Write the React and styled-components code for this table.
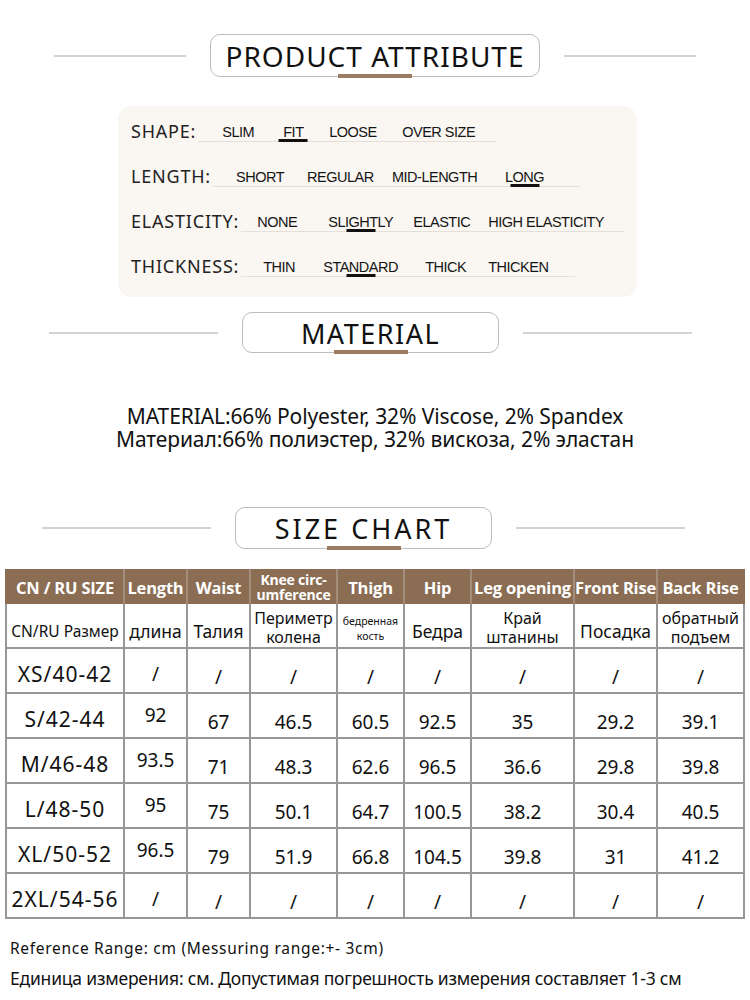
import React from 'react';
import styled, { createGlobalStyle, css } from 'styled-components';

const GlobalStyle = createGlobalStyle`
  body {
    margin: 0;
    background: #ffffff;
  }
`;

const ATTRIBUTES = [
  {
    label: 'SHAPE:',
    pad: 24,
    selected: 1,
    options: [['SLIM', 61], ['FIT', 46], ['LOOSE', 73], ['OVER SIZE', 94]],
  },
  {
    label: 'LENGTH:',
    pad: 23,
    selected: 3,
    options: [['SHORT', 71], ['REGULAR', 85], ['MID-LENGTH', 113], ['LONG', 75]],
  },
  {
    label: 'ELASTICITY:',
    pad: 16,
    selected: 1,
    options: [['NONE', 71], ['SLIGHTLY', 85], ['ELASTIC', 75], ['HIGH ELASTICITY', 136]],
  },
  {
    label: 'THICKNESS:',
    pad: 22,
    selected: 1,
    options: [['THIN', 60], ['STANDARD', 102], ['THICK', 63], ['THICKEN', 87]],
  },
];

const COLUMNS = [120, 63, 63, 87, 67, 67, 103, 83, 87];

const HEAD_EN = ['CN / RU SIZE', 'Length', 'Waist', ['Knee circ-', 'umference'], 'Thigh', 'Hip', 'Leg opening', 'Front Rise', 'Back Rise'];
const HEAD_RU = ['CN/RU Размер', 'длина', 'Талия', ['Периметр', 'колена'], ['бедренная', 'кость'], 'Бедра', ['Край', 'штанины'], 'Посадка', ['обратный', 'подъем']];

const SIZES = [
  ['XS/40-42', '/', '/', '/', '/', '/', '/', '/', '/'],
  ['S/42-44', '92', '67', '46.5', '60.5', '92.5', '35', '29.2', '39.1'],
  ['M/46-48', '93.5', '71', '48.3', '62.6', '96.5', '36.6', '29.8', '39.8'],
  ['L/48-50', '95', '75', '50.1', '64.7', '100.5', '38.2', '30.4', '40.5'],
  ['XL/50-52', '96.5', '79', '51.9', '66.8', '104.5', '39.8', '31', '41.2'],
  ['2XL/54-56', '/', '/', '/', '/', '/', '/', '/', '/'],
];

const Page = styled.div`
  width: 750px;
  padding: 34px 0 20px;
  font-family: 'Noto Sans', 'DejaVu Sans', sans-serif;
  color: #111;
`;

const TitleRow = styled.div`
  display: flex;
  justify-content: center;
  align-items: center;
  gap: 24px;
  margin-top: ${(p) => p.$top || 0}px;
  padding-right: ${(p) => p.$nudge || 0}px;
`;

const Rule = styled.div`
  width: ${(p) => p.$w}px;
  height: 2px;
  background: #d3d3d3;
`;

const TitleBox = styled.div`
  position: relative;
  box-sizing: border-box;
  width: ${(p) => p.$w}px;
  height: ${(p) => p.$h}px;
  display: flex;
  align-items: center;
  justify-content: center;
  border: 1.5px solid #bcbcbc;
  border-radius: 10px;
  font-size: ${(p) => p.$size}px;
  letter-spacing: ${(p) => p.$spacing}px;
  color: #111;
  line-height: 1;
  padding-top: 1px;

  &::after {
    content: '';
    position: absolute;
    left: 50%;
    bottom: -2px;
    width: 74px;
    height: 4px;
    transform: translateX(-50%);
    background: #9c7d64;
  }
`;

const AttrBox = styled.div`
  box-sizing: border-box;
  width: 519px;
  margin: 29px 0 0 118px;
  padding: 6px 0 20px 13px;
  display: flex;
  flex-direction: column;
  gap: 15px;
  background: #faf6f1;
  border-radius: 14px;
`;

const AttrRow = styled.div`
  display: flex;
  align-items: flex-end;
  height: 30px;
`;

const AttrLabel = styled.div`
  font-size: 18px;
  line-height: 22px;
  letter-spacing: 0.8px;
  color: #222;
`;

const Track = styled.div`
  display: flex;
  align-items: flex-end;
  margin-left: 2px;
  padding-left: ${(p) => p.$pad}px;
  padding-bottom: 2px;
  border-bottom: 1px solid #e4dfd8;
`;

const OptCell = styled.div`
  flex: none;
  width: ${(p) => p.$w}px;
  display: flex;
`;

const OptText = styled.span`
  position: relative;
  font-family: 'Liberation Sans', Arial, sans-serif;
  font-size: 14.5px;
  line-height: 14px;
  letter-spacing: -0.5px;
  color: #151515;
  white-space: nowrap;

  ${(p) =>
    p.$selected &&
    css`
      &::after {
        content: '';
        position: absolute;
        left: 50%;
        bottom: -3px;
        width: 29px;
        height: 3px;
        transform: translateX(-50%);
        background: #111;
      }
    `}
`;

const MaterialText = styled.div`
  margin-top: 52px;
  text-align: center;
  font-size: 21px;
  line-height: 23px;
  letter-spacing: -0.1px;
  color: #111;
`;

const Table = styled.table`
  width: 740px;
  margin: 20px 0 0 5px;
  table-layout: fixed;
  border-collapse: separate;
  border-spacing: 0;
`;

const Col = styled.col`
  width: ${(p) => p.$w}px;
`;

const HeadCell = styled.th`
  height: 35px;
  box-sizing: border-box;
  padding: ${(p) => (p.$small ? '0' : '3px 0 0')};
  background: #8b6d54;
  color: #fff;
  font-family: 'Open Sans', 'Noto Sans', sans-serif;
  font-weight: 700;
  font-size: ${(p) => (p.$small ? 14 : 16.5)}px;
  line-height: ${(p) => (p.$small ? 15 : 20)}px;
  letter-spacing: -0.2px;
  white-space: nowrap;
  border-right: 2px solid #a38c79;
  &:first-child {
    border-left: 2px solid #8b6d54;
  }
  &:last-child {
    border-right: 2px solid #8b6d54;
  }
`;

const Cell = styled.td`
  height: 45px;
  box-sizing: border-box;
  padding: ${(p) => p.$pad || '0'};
  text-align: center;
  vertical-align: middle;
  white-space: nowrap;
  color: #111;
  font-size: ${(p) => p.$size}px;
  line-height: ${(p) => p.$lh || 'normal'};
  letter-spacing: ${(p) => p.$ls || 0}px;
  border-right: 2px solid #979797;
  border-bottom: 2px solid #979797;
  &:first-child {
    border-left: 2px solid #979797;
  }
`;

const Notes = styled.div`
  padding-left: 10px;
  color: #111;
`;

const NoteLine = styled.div`
  margin-top: ${(p) => p.$top}px;
  font-size: ${(p) => p.$size}px;
  line-height: ${(p) => p.$lh}px;
  letter-spacing: ${(p) => p.$ls}px;
`;

const lines = (value) =>
  Array.isArray(value) ? (
    <>
      {value[0]}
      <br />
      {value[1]}
    </>
  ) : (
    value
  );

const SectionTitle = ({ text, top, nudge, rule, box, height, size, spacing }) => (
  <TitleRow $top={top} $nudge={nudge}>
    <Rule $w={rule} />
    <TitleBox $w={box} $h={height} $size={size} $spacing={spacing}>
      {text}
    </TitleBox>
    <Rule $w={rule} />
  </TitleRow>
);

const ruCellProps = (value, i) => {
  if (i === 4) return { $size: 10.5, $lh: '15px', $pad: '6px 0 0' };
  if (i === 0) return { $size: 15.5, $lh: '20px', $pad: '10px 0 0' };
  if (Array.isArray(value)) return { $size: 16, $lh: '19px', $pad: '4px 0 0' };
  return { $size: 17.5, $lh: '20px', $pad: '10px 0 0' };
};

const dataCellProps = (value, i) => {
  if (i === 0) return { $size: 21, $ls: 1, $pad: '6px 0 0' };
  if (value === '/') return { $size: 19, $pad: i === 1 ? '6px 0 0' : '12px 0 0' };
  if (i === 1) return { $size: 19, $pad: '0 0 2px' };
  return { $size: 19, $pad: '12px 0 0' };
};

const App = () => (
  <Page>
    <GlobalStyle />
    <SectionTitle text="PRODUCT ATTRIBUTE" rule={132} box={330} height={43} size={28} spacing={1} />

    <AttrBox>
      {ATTRIBUTES.map((attr) => (
        <AttrRow key={attr.label}>
          <AttrLabel>{attr.label}</AttrLabel>
          <Track $pad={attr.pad}>
            {attr.options.map(([name, w], i) => (
              <OptCell key={name} $w={w}>
                <OptText $selected={i === attr.selected}>{name}</OptText>
              </OptCell>
            ))}
          </Track>
        </AttrRow>
      ))}
    </AttrBox>

    <SectionTitle text="MATERIAL" top={15} nudge={9} rule={169} box={257} height={41} size={27} spacing={1.5} />

    <MaterialText>
      MATERIAL:66% Polyester, 32% Viscose, 2% Spandex
      <br />
      Материал:66% полиэстер, 32% вискоза, 2% эластан
    </MaterialText>

    <SectionTitle text="SIZE CHART" top={56} nudge={23} rule={169} box={257} height={42} size={27} spacing={3} />

    <Table>
      <colgroup>
        {COLUMNS.map((w, i) => (
          <Col key={i} $w={w} />
        ))}
      </colgroup>
      <thead>
        <tr>
          {HEAD_EN.map((h, i) => (
            <HeadCell key={i} $small={Array.isArray(h)}>
              {lines(h)}
            </HeadCell>
          ))}
        </tr>
      </thead>
      <tbody>
        <tr>
          {HEAD_RU.map((h, i) => (
            <Cell key={i} {...ruCellProps(h, i)}>
              {lines(h)}
            </Cell>
          ))}
        </tr>
        {SIZES.map((row) => (
          <tr key={row[0]}>
            {row.map((v, i) => (
              <Cell key={i} {...dataCellProps(v, i)}>
                {v}
              </Cell>
            ))}
          </tr>
        ))}
      </tbody>
    </Table>

    <Notes>
      <NoteLine $top={19} $size={15.5} $lh={20} $ls={0.7}>
        Reference Range: cm (Messuring range:+- 3cm)
      </NoteLine>
      <NoteLine $top={6} $size={17.5} $lh={28} $ls={-0.2}>
        Единица измерения: см. Допустимая погрешность измерения составляет 1-3 см
      </NoteLine>
    </Notes>
  </Page>
);

export default App;
